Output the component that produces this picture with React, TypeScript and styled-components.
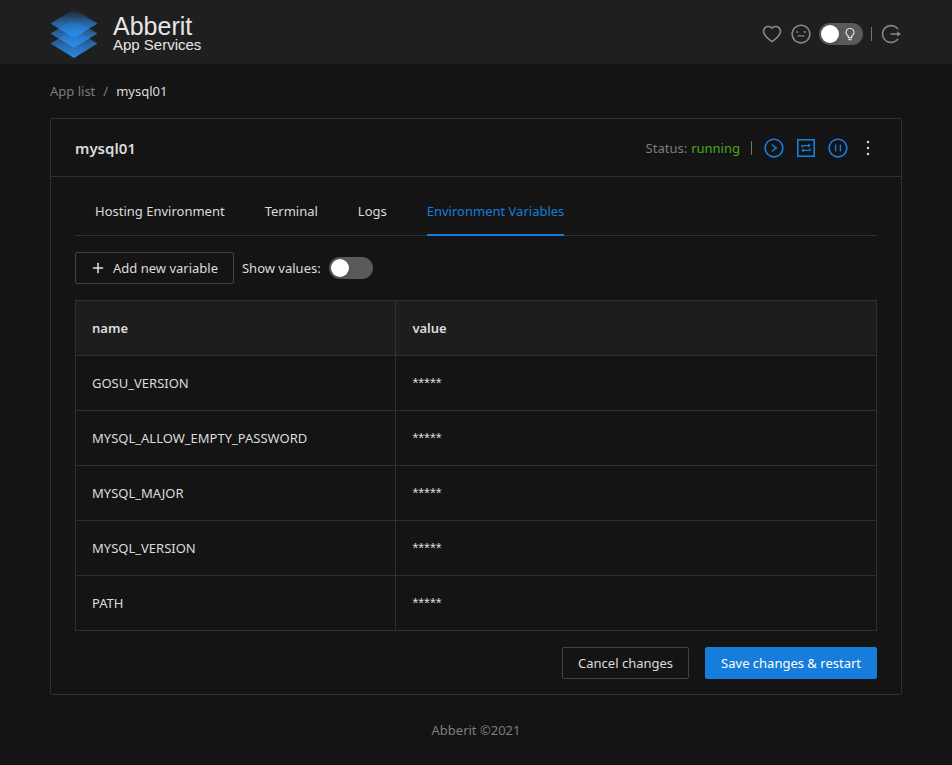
import React, { useState } from "react";
import styled, { createGlobalStyle } from "styled-components";
import {
  AiOutlineBulb,
  AiOutlineHeart,
  AiOutlineLogout,
  AiOutlineMeh,
  AiOutlineMore,
  AiOutlinePauseCircle,
  AiOutlinePlus,
  AiOutlineRightCircle,
} from "react-icons/ai";

const color = {
  page: "#141414",
  bar: "#1f1f1f",
  headCell: "#1d1d1d",
  line: "#303030",
  control: "#434343",
  text: "#dcdcdc",
  muted: "#7d7d7d",
  primary: "#177ddc",
  success: "#49aa19",
};

const GlobalStyle = createGlobalStyle`
  *, *::before, *::after { box-sizing: border-box; }
  body {
    margin: 0;
    background: ${color.page};
    color: ${color.text};
    font: 13px/22px "Segoe UI", "Noto Sans", "Open Sans", sans-serif;
  }
  button { font: inherit; color: inherit; cursor: pointer; }
`;

const Header = styled.header`
  display: flex;
  align-items: center;
  justify-content: space-between;
  height: 64px;
  padding: 0 50px;
  background: ${color.bar};
`;

const Brand = styled.a`
  display: flex;
  align-items: center;
  gap: 15px;
  padding-top: 4px;
  color: #e6e6e6;
  text-decoration: none;
  font-family: Arial, "Liberation Sans", sans-serif;
`;

const BrandText = styled.span`
  display: flex;
  flex-direction: column;
`;

const BrandName = styled.span`
  font-size: 25px;
  line-height: 22px;
`;

const BrandSub = styled.span`
  font-size: 15px;
  line-height: 16px;
`;

const HeaderTools = styled.div`
  display: flex;
  align-items: center;
  gap: 7px;
  padding-top: 4px;
  color: #868686;
`;

const IconButton = styled.button<{ $tone?: string; $narrow?: boolean }>`
  display: flex;
  justify-content: center;
  width: ${(p) => (p.$narrow ? "18px" : "22px")};
  padding: 0;
  border: 0;
  background: none;
  color: ${(p) => p.$tone ?? "inherit"};
  font-size: 22px;
  svg { flex-shrink: 0; }
`;

const SwitchBox = styled.span`
  display: inline-grid;
  align-items: center;
  width: 44px;
  height: 22px;
  > * { grid-area: 1 / 1; }
  > svg {
    justify-self: end;
    margin-right: 6px;
    font-size: 14px;
    color: #fff;
    pointer-events: none;
  }
`;

const SwitchInput = styled.input`
  appearance: none;
  width: 44px;
  height: 22px;
  margin: 0;
  padding: 2px;
  border-radius: 11px;
  background: #5a5a5a;
  cursor: pointer;
  &::before {
    content: "";
    display: block;
    width: 18px;
    height: 18px;
    border-radius: 50%;
    background: #fff;
    box-shadow: 0 2px 4px rgba(0, 35, 11, 0.2);
  }
  &:checked { background: ${color.primary}; }
  &:checked::before { margin-left: auto; }
`;

const Main = styled.main`
  padding: 16px 50px 0;
`;

const Breadcrumb = styled.nav`
  display: flex;
  gap: 8px;
  margin-bottom: 16px;
  color: ${color.muted};
  a { color: inherit; text-decoration: none; }
`;

const Current = styled.span`
  color: ${color.text};
`;

const Card = styled.section`
  border: 1px solid ${color.line};
  border-radius: 2px;
`;

const CardHead = styled.div`
  display: flex;
  align-items: center;
  justify-content: space-between;
  min-height: 58px;
  padding: 0 24px;
  border-bottom: 1px solid ${color.line};
`;

const CardTitle = styled.h1`
  margin: 0;
  font-size: 15px;
  font-weight: 600;
`;

const Actions = styled.div`
  display: flex;
  align-items: center;
  gap: 10px;
`;

const Status = styled.span`
  display: flex;
  gap: 4px;
  color: ${color.muted};
`;

const StatusValue = styled.span`
  color: ${color.success};
`;

const Divider = styled.span`
  width: 1px;
  height: 14px;
  margin: 0 1px;
  background: #77717a;
`;

const CardBody = styled.div`
  padding: 12px 24px 15px;
`;

const Tabs = styled.div`
  display: flex;
  gap: 40px;
  padding-left: 20px;
  border-bottom: 1px solid ${color.line};
`;

const Tab = styled.button<{ $active: boolean }>`
  margin-bottom: -1px;
  padding: 11px 0 12px;
  border: 0;
  border-bottom: 2px solid ${(p) => (p.$active ? color.primary : "transparent")};
  background: none;
  color: ${(p) => (p.$active ? color.primary : color.text)};
`;

const Toolbar = styled.div`
  display: flex;
  align-items: center;
  gap: 8px;
  margin: 16px 0;
`;

const Button = styled.button<{ $primary?: boolean }>`
  display: flex;
  align-items: center;
  gap: 8px;
  height: 32px;
  padding: 0 15px;
  border: 1px solid ${(p) => (p.$primary ? color.primary : color.control)};
  border-radius: 2px;
  background: ${(p) => (p.$primary ? color.primary : "transparent")};
  color: ${(p) => (p.$primary ? "#fff" : color.text)};
  svg { font-size: 14px; stroke-width: 40px; }
`;

const SwitchLabel = styled.label`
  display: flex;
  align-items: center;
  gap: 8px;
`;

const Table = styled.table`
  width: 100%;
  border-collapse: collapse;
  table-layout: fixed;
`;

const cell = `
  height: 55px;
  padding: 0 16px;
  border: 1px solid ${color.line};
  text-align: left;
`;

const HeadCell = styled.th`
  ${cell}
  background: ${color.headCell};
  font-weight: 600;
  &:first-child { width: 40%; }
`;

const Cell = styled.td`
  ${cell}
`;

const Masked = styled.span`
  font-family: Arial, "Liberation Sans", sans-serif;
  font-size: 15px;
`;

const FormActions = styled.div`
  display: flex;
  justify-content: flex-end;
  gap: 16px;
  margin-top: 16px;
`;

const Footer = styled.footer`
  padding: 24px 50px;
  color: ${color.muted};
  text-align: center;
`;

function Logo() {
  return (
    <svg width="48" height="50" viewBox="0 0 48 50" aria-hidden="true">
      <defs>
        <linearGradient id="layer" x1="0" y1="0" x2="0" y2="1">
          <stop offset="0" stopColor="#2b8bea" stopOpacity="0" />
          <stop offset="0.5" stopColor="#2b8bea" stopOpacity="0.65" />
          <stop offset="1" stopColor="#2b8bea" />
        </linearGradient>
      </defs>
      <path d="M24 20 47.5 34.5 24 49 .5 34.5z" fill="url(#layer)" />
      <path d="M24 10 47.5 24.5 24 39 .5 24.5z" fill="url(#layer)" />
      <path d="M24 0 47.5 14.5 24 29 .5 14.5z" fill="url(#layer)" />
    </svg>
  );
}

function RestartIcon() {
  return (
    <svg width="22" height="22" viewBox="0 0 22 22" fill="none" stroke="currentColor" aria-hidden="true">
      <rect x="2.8" y="2.8" width="16.4" height="16.4" strokeWidth="1.6" />
      <path d="M7 10.7V8.6h6.5M15 11.3v2.1H8.5" strokeWidth="1.2" />
      <path d="M13 6.6l2.8 2-2.8 2zM9 11.4l-2.8 2 2.8 2z" fill="currentColor" stroke="none" />
    </svg>
  );
}

type SwitchProps = {
  id: string;
  checked: boolean;
  onChange: (value: boolean) => void;
  label?: string;
  icon?: React.ReactNode;
};

function Switch({ id, checked, onChange, label, icon }: SwitchProps) {
  return (
    <SwitchBox>
      <SwitchInput
        id={id}
        type="checkbox"
        role="switch"
        aria-label={label}
        checked={checked}
        onChange={(e) => onChange(e.target.checked)}
      />
      {icon}
    </SwitchBox>
  );
}

const tabs = ["Hosting Environment", "Terminal", "Logs", "Environment Variables"];

const variables = [
  { name: "GOSU_VERSION", value: "1.12" },
  { name: "MYSQL_ALLOW_EMPTY_PASSWORD", value: "yes" },
  { name: "MYSQL_MAJOR", value: "8.0" },
  { name: "MYSQL_VERSION", value: "8.0.23" },
  { name: "PATH", value: "/usr/local/bin:/usr/bin:/bin" },
];

export default function App() {
  const [active, setActive] = useState(tabs[3]);
  const [showValues, setShowValues] = useState(false);
  const [light, setLight] = useState(false);

  return (
    <>
      <GlobalStyle />
      <Header>
        <Brand href="#">
          <Logo />
          <BrandText>
            <BrandName>Abberit</BrandName>
            <BrandSub>App Services</BrandSub>
          </BrandText>
        </Brand>
        <HeaderTools>
          <IconButton aria-label="Favourite"><AiOutlineHeart /></IconButton>
          <IconButton aria-label="Feedback"><AiOutlineMeh /></IconButton>
          <Switch id="theme" label="Light theme" checked={light} onChange={setLight} icon={<AiOutlineBulb />} />
          <Divider />
          <IconButton aria-label="Log out"><AiOutlineLogout /></IconButton>
        </HeaderTools>
      </Header>
      <Main>
        <Breadcrumb aria-label="Breadcrumb">
          <a href="#">App list</a>
          <span>/</span>
          <Current aria-current="page">mysql01</Current>
        </Breadcrumb>
        <Card>
          <CardHead>
            <CardTitle>mysql01</CardTitle>
            <Actions>
              <Status>
                Status: <StatusValue>running</StatusValue>
              </Status>
              <Divider />
              <IconButton $tone={color.primary} aria-label="Start"><AiOutlineRightCircle /></IconButton>
              <IconButton $tone={color.primary} aria-label="Restart"><RestartIcon /></IconButton>
              <IconButton $tone={color.primary} aria-label="Pause"><AiOutlinePauseCircle /></IconButton>
              <IconButton $narrow aria-label="More"><AiOutlineMore /></IconButton>
            </Actions>
          </CardHead>
          <CardBody>
            <Tabs role="tablist">
              {tabs.map((tab) => (
                <Tab key={tab} role="tab" aria-selected={tab === active} $active={tab === active} onClick={() => setActive(tab)}>
                  {tab}
                </Tab>
              ))}
            </Tabs>
            <Toolbar>
              <Button><AiOutlinePlus />Add new variable</Button>
              <SwitchLabel htmlFor="show-values">
                Show values:
                <Switch id="show-values" checked={showValues} onChange={setShowValues} />
              </SwitchLabel>
            </Toolbar>
            <Table>
              <thead>
                <tr>
                  <HeadCell scope="col">name</HeadCell>
                  <HeadCell scope="col">value</HeadCell>
                </tr>
              </thead>
              <tbody>
                {variables.map((v) => (
                  <tr key={v.name}>
                    <Cell>{v.name}</Cell>
                    <Cell>{showValues ? v.value : <Masked>*****</Masked>}</Cell>
                  </tr>
                ))}
              </tbody>
            </Table>
            <FormActions>
              <Button>Cancel changes</Button>
              <Button $primary>Save changes &amp; restart</Button>
            </FormActions>
          </CardBody>
        </Card>
      </Main>
      <Footer>Abberit ©2021</Footer>
    </>
  );
}
